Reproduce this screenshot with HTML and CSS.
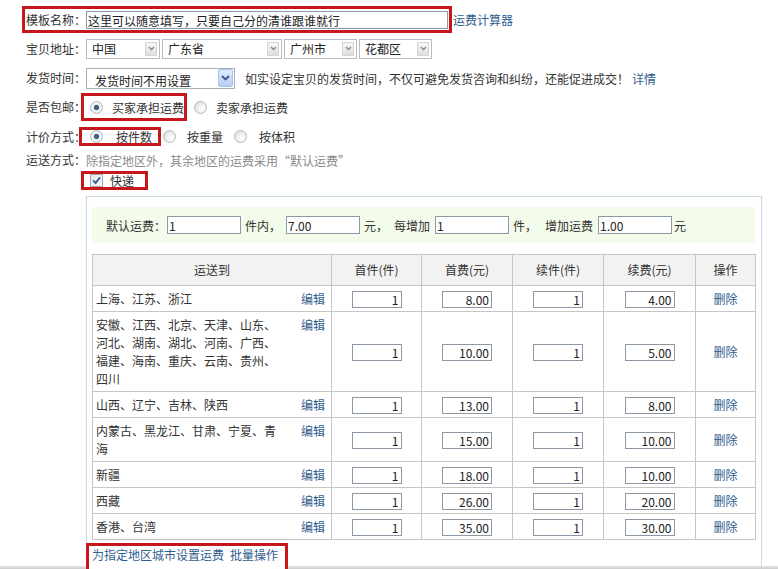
FILE: index.html
```html
<!DOCTYPE html>
<html lang="zh-CN">

<head>
    <meta charset="UTF-8">
    <meta name="viewport" content="width=device-width, initial-scale=1.0">
    <title>运费模板</title>
    <link rel="stylesheet" href="styles.css">
</head>

<body>

    <div class="page">
        <div class="row row-name">
            <div class="mark mark-name">
                <span class="label">模板名称：</span>
                <input class="name-input" type="text" value="这里可以随意填写，只要自己分的清谁跟谁就行">
            </div>
            <a class="calc-link" href="#">运费计算器</a>
        </div>

        <div class="row row-addr">
            <span class="label">宝贝地址：</span>
            <div class="select sel-country"><span>中国</span><span class="arrow-box"><svg width="7" height="5" viewBox="0 0 7 5"><path d="M1 1 L3.5 3.5 L6 1" fill="none" stroke="#8a8a8a" stroke-width="1.4"/></svg></span></div>
            <div class="select sel-province"><span>广东省</span><span class="arrow-box"><svg width="7" height="5" viewBox="0 0 7 5"><path d="M1 1 L3.5 3.5 L6 1" fill="none" stroke="#8a8a8a" stroke-width="1.4"/></svg></span></div>
            <div class="select sel-city"><span>广州市</span><span class="arrow-box"><svg width="7" height="5" viewBox="0 0 7 5"><path d="M1 1 L3.5 3.5 L6 1" fill="none" stroke="#8a8a8a" stroke-width="1.4"/></svg></span></div>
            <div class="select sel-district"><span>花都区</span><span class="arrow-box"><svg width="7" height="5" viewBox="0 0 7 5"><path d="M1 1 L3.5 3.5 L6 1" fill="none" stroke="#8a8a8a" stroke-width="1.4"/></svg></span></div>
        </div>

        <div class="row row-time">
            <span class="label">发货时间：</span>
            <div class="select sel-time"><span class="sel-time-text">发货时间不用设置</span><span class="arrow-blue"><svg width="9" height="6" viewBox="0 0 9 6"><path d="M1 1 L4.5 4.5 L8 1" fill="none" stroke="#3d5486" stroke-width="1.8"/></svg></span></div>
            <span class="hint">如实设定宝贝的发货时间，不仅可避免发货咨询和纠纷，还能促进成交！</span>
            <a class="hint-link" href="#">详情</a>
        </div>

        <div class="row row-free">
            <span class="label">是否包邮：</span>
            <div class="mark mark-free">
                <span class="radio checked"></span>
                <span class="opt-text first">买家承担运费</span>
            </div>
            <span class="radio radio-2"></span>
            <span class="opt-text">卖家承担运费</span>
        </div>

        <div class="row row-price">
            <span class="label">计价方式：</span>
            <div class="mark mark-price">
                <span class="radio checked"></span>
                <span class="opt-text">按件数</span>
            </div>
            <span class="radio radio-b"></span>
            <span class="opt-text opt-b">按重量</span>
            <span class="radio radio-c"></span>
            <span class="opt-text opt-c">按体积</span>
        </div>

        <div class="row row-way">
            <span class="label">运送方式：</span>
            <span class="muted">除指定地区外，其余地区的运费采用“默认运费”</span>
        </div>

        <div class="row row-express">
            <div class="mark mark-express">
                <span class="checkbox"><svg width="11" height="11" viewBox="0 0 11 11"><path d="M2.2 5.4 L4.6 8 L9 2.4" fill="none" stroke="#2f5a98" stroke-width="1.8"/></svg></span>
                <span class="express-text">快递</span>
            </div>
        </div>

        <div class="fee-box">
            <div class="default-fee">
                <span>默认运费：</span>
                <input class="fee-input" type="text" value="1">
                <span class="gap">件内，</span>
                <input class="fee-input" type="text" value="7.00">
                <span class="gap gap-yuan">元，</span>
                <span class="gap">每增加</span>
                <input class="fee-input" type="text" value="1">
                <span class="gap">件，</span>
                <span class="gap">增加运费</span>
                <input class="fee-input" type="text" value="1.00">
                <span class="gap-s">元</span>
            </div>

            <table class="fee-table">
                <colgroup>
                    <col class="c-area">
                    <col class="c-num">
                    <col class="c-num2">
                    <col class="c-num2">
                    <col class="c-num3">
                    <col class="c-op">
                </colgroup>
                <thead>
                    <tr>
                        <th>运送到</th>
                        <th>首件(件)</th>
                        <th>首费(元)</th>
                        <th>续件(件)</th>
                        <th>续费(元)</th>
                        <th>操作</th>
                    </tr>
                </thead>
                <tbody>
                    <tr>
                        <td class="area"><div class="area-box"><span class="area-text">上海、江苏、浙江</span><a href="#">编辑</a></div></td>
                        <td><input class="num" type="text" value="1"></td>
                        <td><input class="num" type="text" value="8.00"></td>
                        <td><input class="num" type="text" value="1"></td>
                        <td><input class="num" type="text" value="4.00"></td>
                        <td><a href="#">删除</a></td>
                    </tr>
                    <tr>
                        <td class="area"><div class="area-box"><span class="area-text">安徽、江西、北京、天津、山东、河北、湖南、湖北、河南、广西、福建、海南、重庆、云南、贵州、四川</span><a href="#">编辑</a></div></td>
                        <td><input class="num" type="text" value="1"></td>
                        <td><input class="num" type="text" value="10.00"></td>
                        <td><input class="num" type="text" value="1"></td>
                        <td><input class="num" type="text" value="5.00"></td>
                        <td><a href="#">删除</a></td>
                    </tr>
                    <tr>
                        <td class="area"><div class="area-box"><span class="area-text">山西、辽宁、吉林、陕西</span><a href="#">编辑</a></div></td>
                        <td><input class="num" type="text" value="1"></td>
                        <td><input class="num" type="text" value="13.00"></td>
                        <td><input class="num" type="text" value="1"></td>
                        <td><input class="num" type="text" value="8.00"></td>
                        <td><a href="#">删除</a></td>
                    </tr>
                    <tr>
                        <td class="area"><div class="area-box"><span class="area-text">内蒙古、黑龙江、甘肃、宁夏、青海</span><a href="#">编辑</a></div></td>
                        <td><input class="num" type="text" value="1"></td>
                        <td><input class="num" type="text" value="15.00"></td>
                        <td><input class="num" type="text" value="1"></td>
                        <td><input class="num" type="text" value="10.00"></td>
                        <td><a href="#">删除</a></td>
                    </tr>
                    <tr>
                        <td class="area"><div class="area-box"><span class="area-text">新疆</span><a href="#">编辑</a></div></td>
                        <td><input class="num" type="text" value="1"></td>
                        <td><input class="num" type="text" value="18.00"></td>
                        <td><input class="num" type="text" value="1"></td>
                        <td><input class="num" type="text" value="10.00"></td>
                        <td><a href="#">删除</a></td>
                    </tr>
                    <tr>
                        <td class="area"><div class="area-box"><span class="area-text">西藏</span><a href="#">编辑</a></div></td>
                        <td><input class="num" type="text" value="1"></td>
                        <td><input class="num" type="text" value="26.00"></td>
                        <td><input class="num" type="text" value="1"></td>
                        <td><input class="num" type="text" value="20.00"></td>
                        <td><a href="#">删除</a></td>
                    </tr>
                    <tr>
                        <td class="area"><div class="area-box"><span class="area-text">香港、台湾</span><a href="#">编辑</a></div></td>
                        <td><input class="num" type="text" value="1"></td>
                        <td><input class="num" type="text" value="35.00"></td>
                        <td><input class="num" type="text" value="1"></td>
                        <td><input class="num" type="text" value="30.00"></td>
                        <td><a href="#">删除</a></td>
                    </tr>
                </tbody>
            </table>

            <div class="mark mark-batch">
                <a href="#">为指定地区城市设置运费</a>
                <a class="batch-link" href="#">批量操作</a>
            </div>
        </div>
    </div>

    <div class="window-edge"></div>

</body>

</html>
```

FILE: styles.css
```css
html,
body {
    margin: 0;
    padding: 0;
    overflow: hidden;
}

body {
    font-family: "Noto Sans CJK SC", "Noto Sans", sans-serif;
    font-size: 12px;
    color: #333;
    background-color: #fff;
}

a {
    color: #2f5d8f;
    text-decoration: none;
}

input {
    font: inherit;
    color: #222;
    margin: 0;
    box-sizing: border-box;
    outline: none;
}

.page {
    padding: 6px 0 0 22px;
}

.row {
    display: flex;
    align-items: center;
}

.label {
    width: 60px;
    flex-shrink: 0;
    line-height: 18px;
}

/* red annotation frames */
.mark {
    display: flex;
    align-items: center;
    border: 3px solid #c8161d;
    box-sizing: border-box;
}

.row-name {
    height: 27px;
}

.mark-name {
    height: 27px;
    padding: 2px 1px 1px 1px;
}

.name-input {
    width: 362px;
    height: 18px;
    padding: 0 1px;
    border: 1px solid #8c9aa8;
    line-height: 16px;
}

.calc-link {
    margin-left: 1px;
}

.row-addr {
    margin-top: 4px;
    height: 23px;
    padding-left: 4px;
}

.select {
    display: flex;
    align-items: center;
    justify-content: space-between;
    height: 20px;
    box-sizing: border-box;
    border: 1px solid #b9bcbf;
    padding: 0 2px 0 5px;
    margin-right: 2px;
    background-color: #fff;
    color: #222;
}

.sel-country {
    width: 74px;
}

.sel-province {
    width: 120px;
}

.sel-city {
    width: 73px;
}

.sel-district {
    width: 73px;
}

.arrow-box {
    display: flex;
    align-items: center;
    justify-content: center;
    width: 12px;
    height: 14px;
    box-sizing: border-box;
    border: 1px solid #d4d4d4;
    background: linear-gradient(#f7f7f7, #dedede);
}

.row-time {
    margin-top: 6px;
    height: 24px;
    padding-left: 4px;
}

.sel-time {
    width: 149px;
    height: 21px;
    padding: 0 1px 0 8px;
    align-items: stretch;
    border-color: #a9b0b6;
}

.sel-time-text {
    padding-top: 3px;
    line-height: 17px;
}

.arrow-blue {
    display: flex;
    align-items: center;
    justify-content: center;
    width: 15px;
    margin: 0 0 1px;
    box-sizing: border-box;
    border: 1px solid #aac0ee;
    border-radius: 2px;
    background: linear-gradient(#e2eafd, #b8cbf5);
}

.hint {
    margin-left: 8px;
}

.hint-link {
    margin-left: 3px;
}

.row-free {
    margin-top: 3px;
    height: 28px;
    padding-left: 4px;
}

.mark-free {
    height: 28px;
    margin-left: -5px;
    padding: 0 0 0 6px;
}

.radio {
    display: inline-block;
    flex-shrink: 0;
    width: 13px;
    height: 13px;
    box-sizing: border-box;
    border-radius: 50%;
    border: 1px solid #b4b8bc;
    background: radial-gradient(circle at 65% 65%, #ffffff 0, #f0f0f0 40%, #d9d9d9 100%);
}

.radio.checked {
    background: radial-gradient(circle, #44607f 0, #44607f 2.2px, #dfe6ee 3px, #fafafa 4.2px, #dcdcdc 6px);
}

.opt-text {
    margin-left: 9px;
    line-height: 13px;
}

.radio-2 {
    margin-left: 7px;
}

.row-price {
    margin-top: 6px;
    height: 19px;
    padding-left: 4px;
}

.mark-price {
    height: 19px;
    margin-left: -7px;
    padding: 0 6px 0 8px;
}

.mark-price .opt-text {
    margin-left: 13px;
}

.radio-b {
    margin-left: 2px;
}

.opt-b {
    margin-left: 11px;
}

.radio-c {
    margin-left: 11px;
}

.opt-c {
    margin-left: 12px;
}

.row-way {
    margin-top: 5px;
    height: 18px;
    padding-left: 4px;
}

.muted {
    color: #8a8a8a;
}

.row-express {
    margin-top: 2px;
    height: 19px;
    padding-left: 59px;
}

.mark-express {
    height: 19px;
    padding: 0 11px 0 6px;
}

.checkbox {
    display: flex;
    align-items: center;
    justify-content: center;
    width: 13px;
    height: 13px;
    box-sizing: border-box;
    border: 1px solid #a3a8ad;
    background: linear-gradient(135deg, #e4e4e4, #fbfbfb);
}

.express-text {
    margin-left: 7px;
    line-height: 13px;
}

/* shipping fee box */
.fee-box {
    margin: 6px 0 0 64px;
    width: 676px;
    height: 400px;
    box-sizing: border-box;
    padding: 10px 6px 0 5px;
    border: 1px solid #c8dae4;
}

.default-fee {
    display: flex;
    align-items: center;
    height: 36px;
    padding-left: 14px;
    background-color: #f3fbea;
}

.fee-input {
    width: 74px;
    height: 18px;
    margin-left: 1px;
    padding: 0 1px;
    border: 1px solid #8c9aa8;
    line-height: 16px;
}

.gap {
    margin: 0 4px 0 4px;
}

.gap-yuan {
    margin-right: 2px;
}

.gap-s {
    margin-left: 2px;
}

.fee-table {
    margin-top: 11px;
    width: 663px;
    table-layout: fixed;
    border-collapse: collapse;
}

.c-area {
    width: 239px;
}

.c-num {
    width: 90px;
}

.c-num2 {
    width: 91px;
}

.c-num3 {
    width: 92px;
}

.c-op {
    width: 60px;
}

.fee-table th,
.fee-table td {
    border: 1px solid #c6c6c6;
}

.fee-table th {
    height: 30px;
    padding: 0;
    font-weight: normal;
    background-color: #f2f2f2;
    line-height: 18px;
}

.fee-table td {
    padding: 4px 3px 3px;
    line-height: 18px;
    text-align: center;
    vertical-align: middle;
}

.fee-table td.area {
    text-align: left;
    vertical-align: top;
    padding-right: 6px;
}

.area-box {
    display: flex;
    justify-content: space-between;
    align-items: flex-start;
}

.area-text {
    width: 186px;
}

.num {
    display: block;
    width: 50px;
    height: 17px;
    margin: 0 auto;
    padding: 0 2px 0 1px;
    border: 1px solid #8c98a3;
    text-align: right;
    line-height: 15px;
}

.mark-batch {
    display: inline-flex;
    position: relative;
    z-index: 1;
    margin: 3px 0 0 -6px;
    padding: 0 7px 6px 3px;
    line-height: 18px;
    background-color: #fff;
}

.batch-link {
    margin-left: 6px;
}

/* bottom edge of the browser window */
.window-edge {
    position: fixed;
    left: 0;
    right: 0;
    bottom: 0;
    height: 3px;
    background: linear-gradient(#e2e2e2, #cdcdcd);
}
```
